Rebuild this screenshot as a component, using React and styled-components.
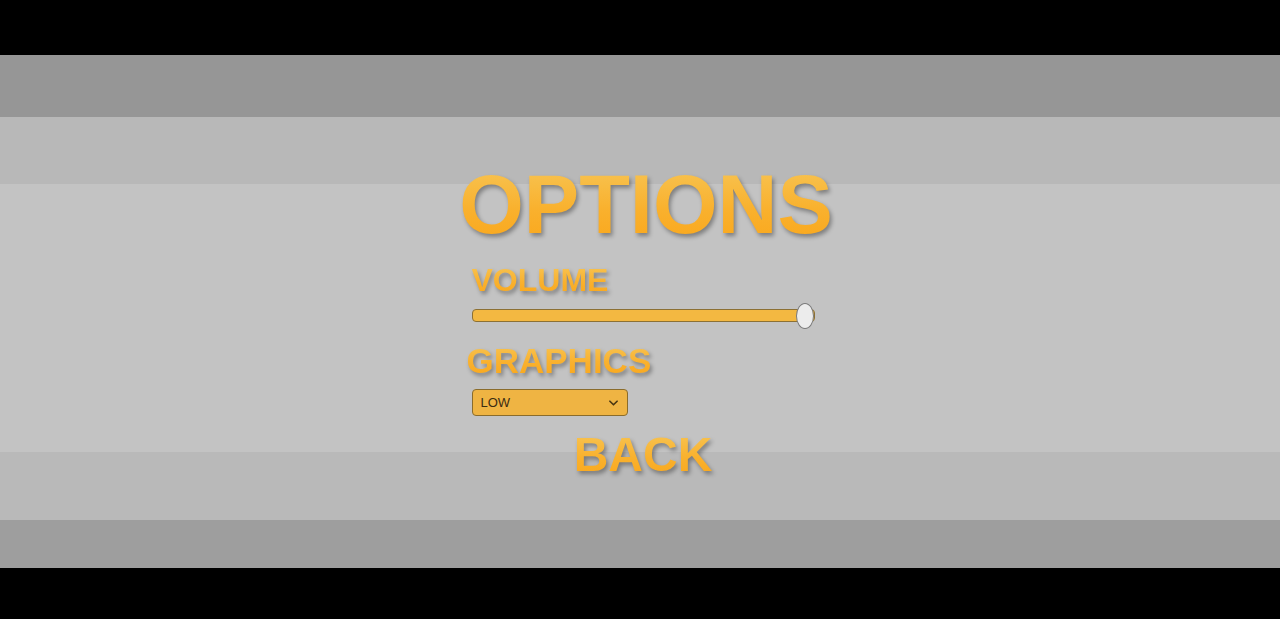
import styled, { createGlobalStyle } from "styled-components";
import { useState } from "react";

const GlobalStyle = createGlobalStyle`
  html, body {
    margin: 0;
    padding: 0;
    background: #000;
    overflow: hidden;
  }
`;

// stripes behind the menu, top to bottom
const bands = [
  { height: 55, color: "#000000" },
  { height: 62, color: "#969696" },
  { height: 67, color: "#b8b8b8" },
  { height: 268, color: "#c3c3c3" },
  { height: 68, color: "#b9b9b9" },
  { height: 48, color: "#9e9e9e" },
  { height: 51, color: "#000000" },
];

export default function App() {
  const [volume, setVolume] = useState(100);
  const [quality, setQuality] = useState("low");

  return (
    <>
      <GlobalStyle />
      <Screen>
        <Backdrop>
          {bands.map((band, index) => (
            <Band key={index} $height={band.height} $color={band.color} />
          ))}
        </Backdrop>

        <Menu>
          <Title>OPTIONS</Title>
          <Settings>
            <Label $size={32} $top={18}>VOLUME</Label>
            <Slider
              type="range"
              min="0"
              max="100"
              value={volume}
              onChange={(e) => setVolume(Number(e.target.value))}
            />
            <Label $size={35} $top={15} $shift={-5}>GRAPHICS</Label>
            <SelectBox>
              <QualitySelect
                value={quality}
                onChange={(e) => setQuality(e.target.value)}
              >
                <option value="low">LOW</option>
                <option value="medium">MEDIUM</option>
                <option value="high">HIGH</option>
              </QualitySelect>
              <Chevron viewBox="0 0 10 6" aria-hidden="true">
                <path d="M1 1l4 4 4-4" />
              </Chevron>
            </SelectBox>
          </Settings>
          <BackButton>BACK</BackButton>
        </Menu>
      </Screen>
    </>
  );
}

const Screen = styled.div`
  display: grid;
  width: 1280px;
  height: 619px;
  overflow: hidden;

  & > * {
    grid-area: 1 / 1;
  }
`;

const Backdrop = styled.div`
  display: flex;
  flex-direction: column;
`;

const Band = styled.div`
  height: ${(p) => p.$height}px;
  background-color: ${(p) => p.$color};
  flex-shrink: 0;
`;

const Menu = styled.div`
  display: flex;
  flex-direction: column;
  align-items: center;
  padding-top: 163px;
  padding-left: 12px;
  font-family: "Liberation Sans", Arial, sans-serif;
  font-weight: 700;
`;

const GoldText = styled.div`
  background: linear-gradient(180deg, #f7c555 0%, #f9b12e 55%, #faa71b 100%);
  -webkit-background-clip: text;
  background-clip: text;
  color: transparent;
  filter: drop-shadow(2px 3px 2px rgba(0, 0, 0, 0.35));
  line-height: 1;
  user-select: none;
`;

const Title = styled(GoldText)`
  font-size: 83px;
`;

const Settings = styled.div`
  display: flex;
  flex-direction: column;
  align-items: flex-start;
  width: 343px;
  margin-right: 6px;
`;

const Label = styled(GoldText)`
  font-size: ${(p) => p.$size}px;
  margin-top: ${(p) => p.$top}px;
  margin-left: ${(p) => p.$shift || 0}px;
`;

const Slider = styled.input`
  -webkit-appearance: none;
  appearance: none;
  width: 343px;
  height: 26px;
  margin: 6px 0 0;
  padding: 0;
  background: transparent;
  cursor: pointer;

  &::-webkit-slider-runnable-track {
    height: 13px;
    box-sizing: border-box;
    background: #f3b841;
    border: 1px solid #8c7034;
    border-radius: 4px;
  }

  &::-webkit-slider-thumb {
    -webkit-appearance: none;
    width: 18px;
    height: 26px;
    margin-top: -7px;
    box-sizing: border-box;
    border-radius: 50%;
    background: #ececec;
    border: 1px solid #7a7a7a;
  }

  &:focus {
    outline: none;
  }
`;

const SelectBox = styled.div`
  position: relative;
  width: 156px;
  height: 27px;
  margin-top: 11px;
`;

const QualitySelect = styled.select`
  -webkit-appearance: none;
  appearance: none;
  width: 100%;
  height: 100%;
  margin: 0;
  padding: 0 0 0 8px;
  background-color: #efb443;
  border: 1px solid #8a6c2c;
  border-radius: 4px;
  color: #3b2c12;
  font-family: "Liberation Sans", Arial, sans-serif;
  font-size: 13px;
  cursor: pointer;

  &:focus {
    outline: none;
  }
`;

const Chevron = styled.svg`
  position: absolute;
  right: 10px;
  top: 11px;
  width: 9px;
  height: 6px;
  fill: none;
  stroke: #4a3612;
  stroke-width: 1.8;
  stroke-linecap: round;
  stroke-linejoin: round;
  pointer-events: none;
`;

const BackButton = styled(GoldText)`
  font-size: 48px;
  margin-top: 15px;
  margin-right: 6px;
  cursor: pointer;
`;
